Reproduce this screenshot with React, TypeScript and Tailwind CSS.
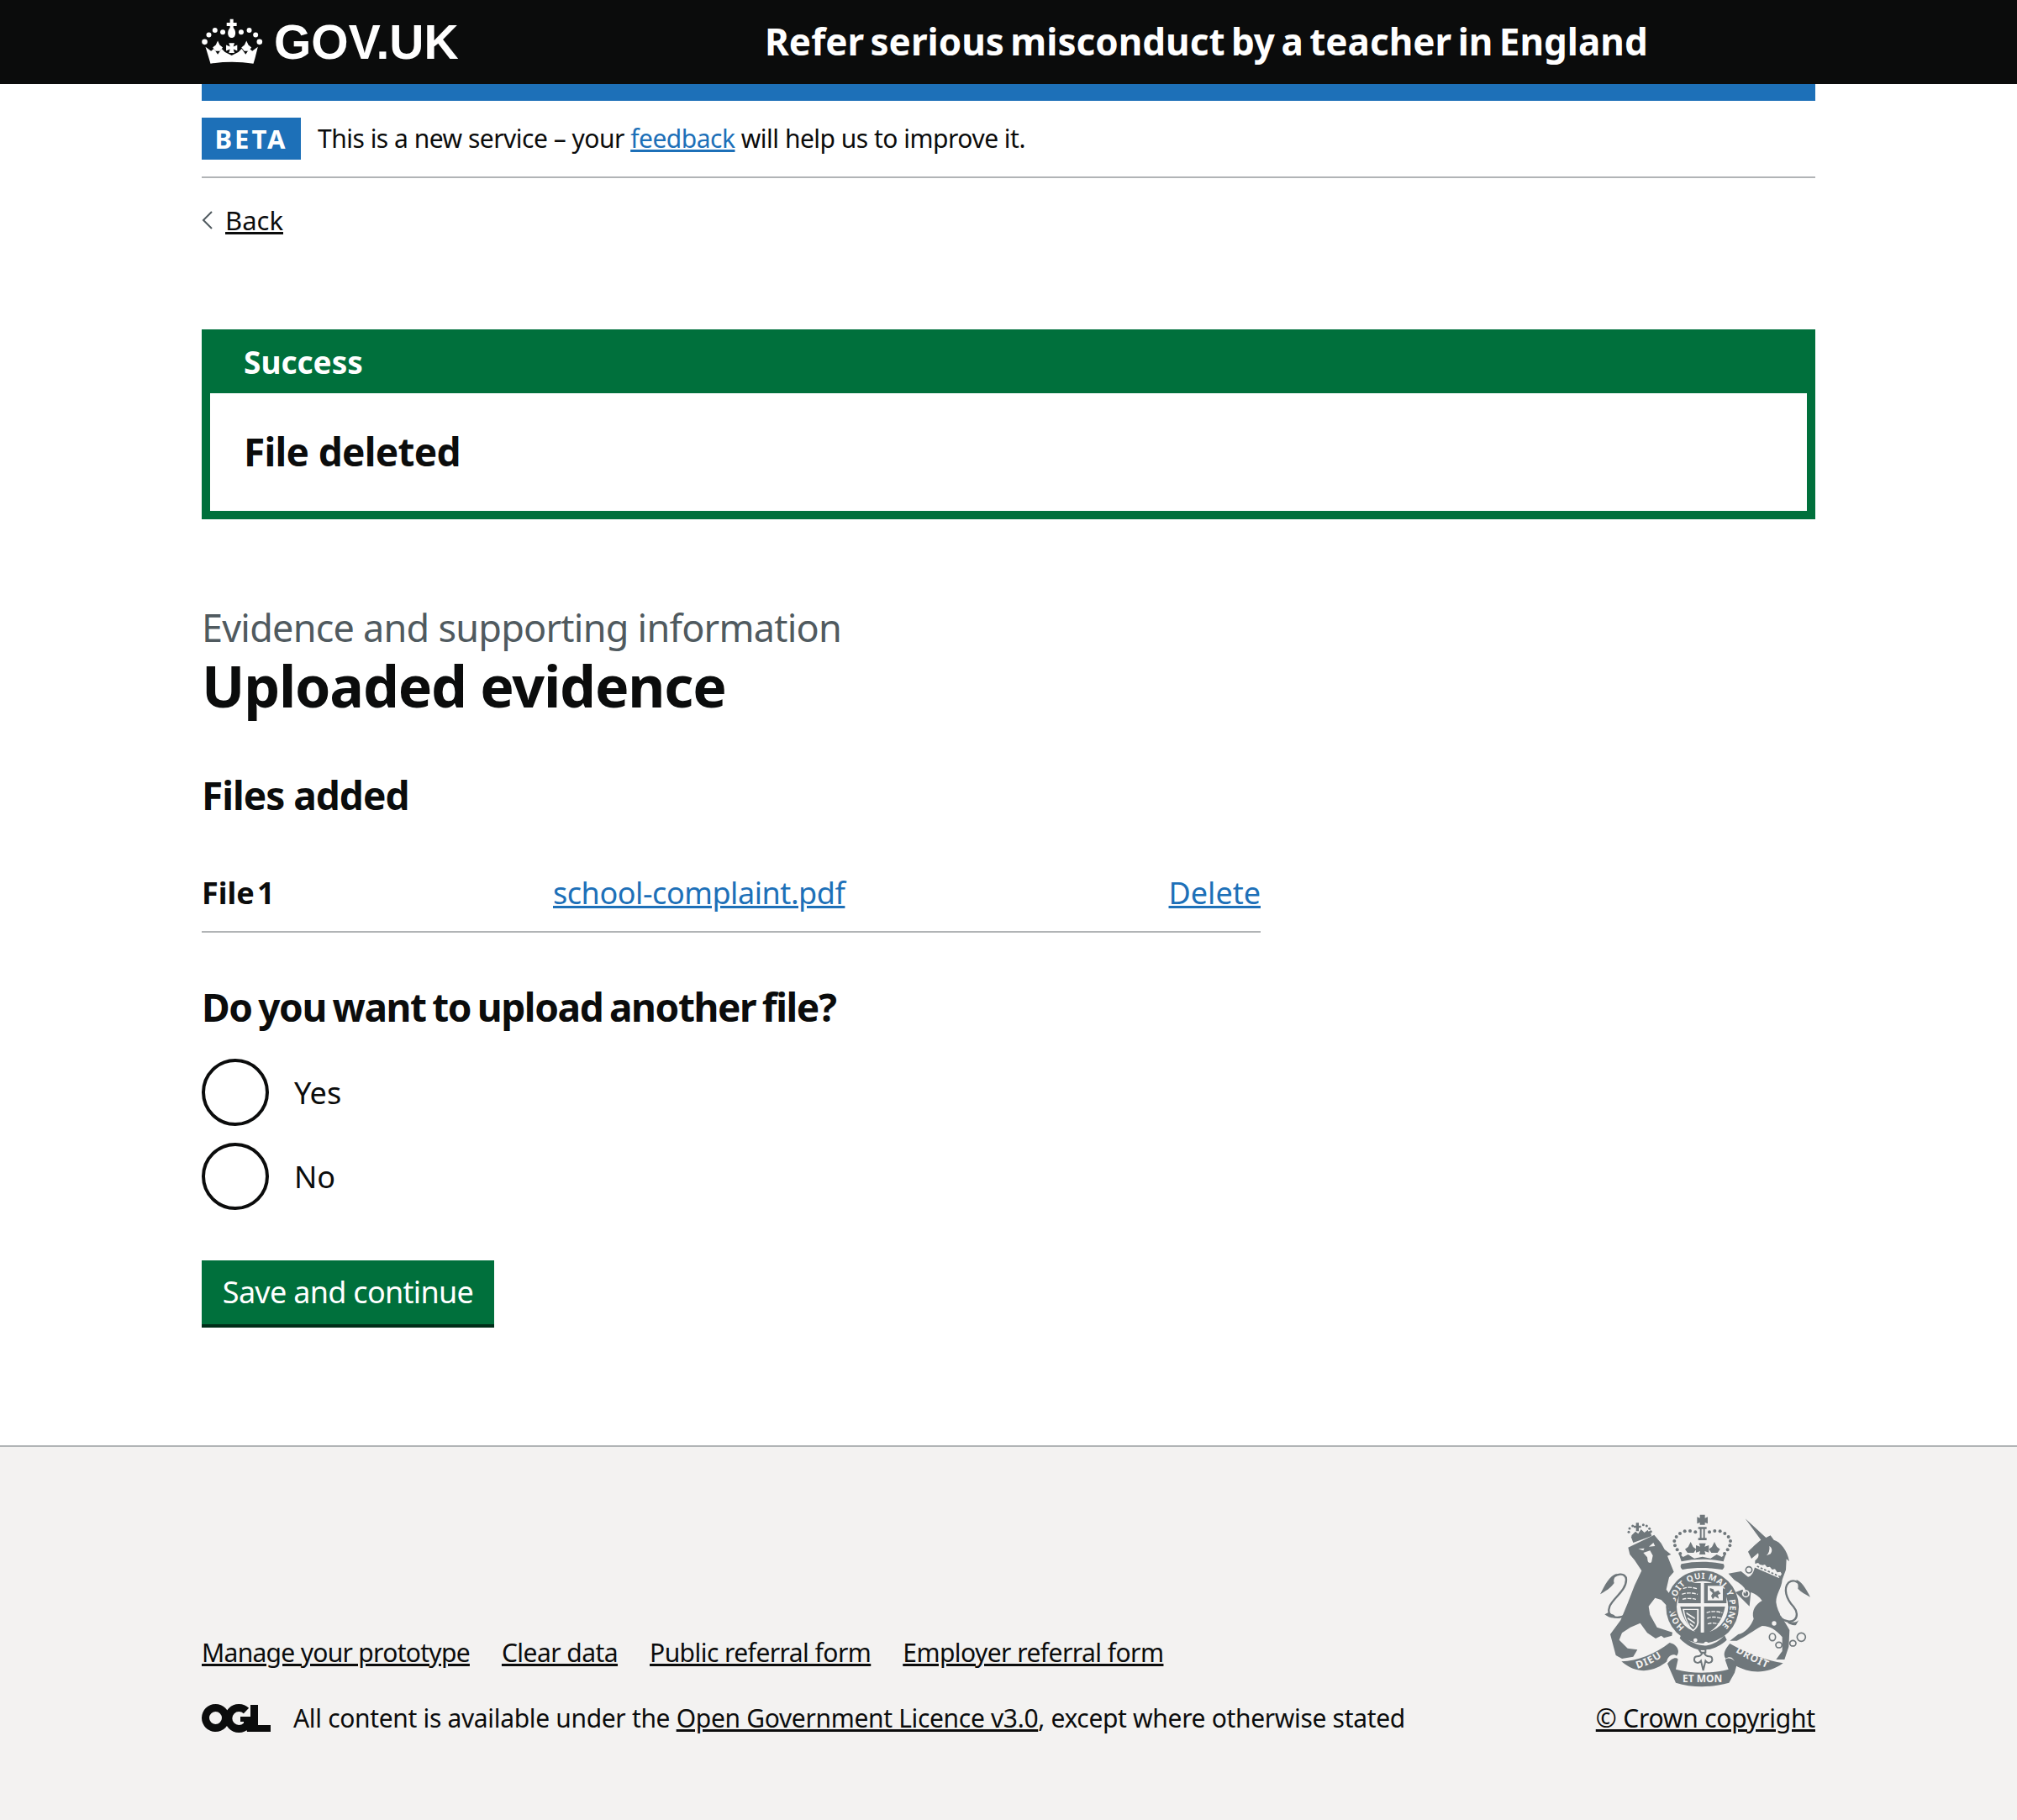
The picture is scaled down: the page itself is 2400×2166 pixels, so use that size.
import React from 'react'

const sans = 'font-["Noto_Sans",sans-serif]'

const CrownLogo = () => (
  <svg viewBox="15 15 222 175" className="w-[74px] h-[58px] fill-white">
    <path d="M116 20h12v13h12v12h-12v6c8 9 10 22 4 32-4 6-16 6-20 0-6-10-4-23 4-32v-6h-12V33h12z" />
    <circle cx="25" cy="102" r="10" /><circle cx="222" cy="102" r="10" />
    <circle cx="40" cy="77" r="9" /><circle cx="208" cy="77" r="9" />
    <circle cx="62" cy="60" r="9" /><circle cx="185" cy="60" r="9" />
    <circle cx="90" cy="67" r="9" /><circle cx="156" cy="67" r="9" />
    <path d="M72 98l7 15 11 9-10 13H64l-10-13 11-9z" />
    <path d="M175 98l7 15 11 9-10 13h-16l-10-13 11-9z" />
    <path d="M112 106h20l-4 13 14-6v21l-14-6 4 14h-20l4-14-14 6v-21l14 6z" />
    <path d="M28 120l20 15 10-8 14 20 14-20 12 12 24 12 24-12 12-12 14 20 14-20 10 8 20-15-10 40-6 20q-77-12-154 0l-6-20z" />
  </svg>
)

const OglLogo = () => (
  <svg viewBox="0 0 82 34" className="w-[82px] h-[34px] fill-[#0b0c0c]">
    <path fillRule="evenodd" d="M16.500 0a16.500 16.500 0 1 1 0 33a16.500 16.500 0 1 1 0-33zM16.500 9a7.500 7.500 0 1 0 0 15a7.500 7.500 0 1 0 0-15z" />
    <path d="M53 8A12.500 12.500 0 1 0 53 26" fill="none" stroke="#0b0c0c" strokeWidth="9" />
    <path d="M46 15h14v18h-6l-1-4-3-1v-7h-4z" />
    <path d="M58 1h9v24h15v8H58z" />
  </svg>
)

// coat of arms, traced by eye
const Crest = () => (
  <svg viewBox="66 60 762 624" className="w-[254px] h-[208px] fill-[#6f777b]">
    <defs>
      <path id="garter" d="M374 470A98 98 0 1 1 500 470" />
      <path id="dieu" d="M205 618C245 605 285 585 315 558" />
      <path id="droit" d="M555 558C590 580 630 600 672 618" />
    </defs>

    {/* royal crown */}
    <path d="M428 68h18v12l10-4v24l-10-4v8h-18v-8l-10 4V76l10 4z" />
    <path d="M422 112h30v7h-6v32h6v8h-30v-8h6v-32h-6zM434 119v32h6v-32z" fillRule="evenodd" />
    {[[412, 130], [393, 126], [374, 127], [357, 135], [344, 147], [337, 162], [339, 178], [347, 193], [358, 207],
      [462, 130], [481, 126], [500, 127], [517, 135], [530, 147], [537, 162], [535, 178], [527, 193], [516, 207]].map(([cx, cy]) => (
      <circle key={`${cx}-${cy}`} cx={cx} cy={cy} r="6" />
    ))}
    <path d="M395 165l9 18 11 8-9 13h-22l-9-13 11-8zM480 165l9 18 11 8-9 13h-22l-9-13 11-8z" />
    <path d="M425 170h24l-4 12 15-5v26l-15-5 3 12h-22l3-12-15 5v-26l15 5z" />
    <path d="M352 205l16 14 18-9 22 14 29-6 29 6 22-14 18 9 16-14-10 30c-46-10-104-10-150 0z" />
    <path d="M362 244c48-10 102-10 150 0 6 8 2 16-4 20-44-8-98-8-142 0-6-4-10-12-4-20z" />

    {/* garter and shield */}
    <circle cx="437" cy="397" r="130" />
    <circle cx="437" cy="397" r="92" fill="#f3f2f1" />
    <path d="M355 312h76v72h-80zM443 312h77l3 72h-80zM358 396h73v100c-38-14-63-52-73-100zM443 396h75c-9 50-36 86-75 100z" />
    <g fill="none" stroke="#f3f2f1" strokeWidth="4">
      <path d="M368 332c12-6 30-6 50 0M364 352c14-6 36-6 56 0M366 370c12-4 30-4 48 0" strokeDasharray="14 4" />
      <path d="M452 418c14-6 36-6 56 0M454 438c12-6 32-6 50 0M456 458c10-4 24-4 40 0" strokeDasharray="14 4" />
    </g>
    <path d="M456 322h54v52h-54z" fill="#f3f2f1" />
    <path d="M464 330l12 4 4 10 14-6 8 12-10 4 4 14-14-8-8 10-6-12 6-10-10-10z" />
    <path d="M366 404h58v50c-2 14-10 24-20 30-16-12-32-44-38-80z" fill="#f3f2f1" />
    <path d="M372 408l46 0 0 46c-2 12-8 20-14 24-14-10-28-40-32-70z" />
    <path d="M380 416l30 20v6l-30-20zM384 434l26 18v6l-26-18zM392 454l14 10v6l-14-10z" fill="#f3f2f1" />
    <text className={sans} fontSize="30" fontWeight="700" fill="#f3f2f1">
      <textPath href="#garter" textLength="470" lengthAdjust="spacing">HONI SOIT QUI MAL Y PENSE</textPath>
    </text>
    <path d="M362 495c20 20 50 38 78 40s56-14 76-36l8 16c-24 22-54 36-84 36-30 0-62-18-84-42z" />
    <circle cx="412" cy="516" r="7" fill="#f3f2f1" /><circle cx="450" cy="528" r="7" fill="#f3f2f1" />

    {/* lion */}
    <path d="M172 185L265 140 290 170 302 192 325 210 312 215 335 272 318 292 308 335 345 385 345 410 328 420 312 395 290 372 268 365 245 395 250 425 275 470 330 488 328 500 300 508 290 500 270 510 240 490 215 455 180 470 150 490 140 515 170 545 205 550 190 575 150 582 128 570 108 495 145 445 170 385 195 320 220 268 195 230 178 210z" />
    <path d="M165 425C130 445 92 432 106 395C118 365 165 340 165 300C165 272 125 276 108 305" fill="none" stroke="#6f777b" strokeWidth="7" />
    <path d="M132 278C105 285 88 320 72 352C92 340 108 332 122 312C118 300 124 290 132 278z" />
    <path d="M100 418c-6 4-12 6-12 6 12 10 26 14 40 12l-6-10z" />
    <path d="M208 190l22-2-4 8zM262 168l-16 14 22-2z" fill="#f3f2f1" />
    <path d="M226 204l24-8 10 18-4 20c0 8-12 8-14 0l-2-14z" fill="#f3f2f1" />

    {/* lion crown */}
    <path d="M182 146l68-20 6 18-66 24z" />
    <path d="M184 142l14-14 10 8 10-16 12 12 12-10 4 12-60 18z" />
    <path d="M200 97h10v10h8v8h-8v12h-10v-12h-8v-8h8z" />
    {[[174, 130], [177, 117], [188, 108], [226, 104], [238, 108], [248, 118], [253, 128]].map(([cx, cy]) => (
      <circle key={`${cx}-${cy}`} cx={cx} cy={cy} r="4.500" />
    ))}

    {/* unicorn */}
    <path d="M590 82L664 150 680 142 692 158C716 165 740 195 747 235L737 226 735 265 722 300C720 330 700 350 700 380C705 420 730 445 748 480L745 540 730 585 700 585 722 555 722 505C700 480 680 465 650 465C620 480 590 505 560 518L535 518 565 495C590 490 610 465 620 440C610 410 630 385 650 375C640 360 625 350 610 345L605 395 555 345 580 335 590 350C600 330 565 310 550 300L530 278 575 270 600 290C612 290 622 270 625 250L625 232C635 225 640 215 636 205L612 225 600 200C620 180 632 168 646 158z" />
    <path d="M622 244l14-4 6 6 10 2 8-2 8 10 10-2 8 10 10-2 8 12 12-2 4 8-10 14-88-38z" fill="#f3f2f1" />
    <path d="M632 252l84 38" stroke="#6f777b" strokeWidth="5" fill="none" strokeDasharray="8 6" />
    <path d="M676 180c10 6 12 18 4 28l-14 6c8-8 12-20 10-34z" fill="#f3f2f1" />
    <g fill="#f3f2f1">
      <circle cx="726" cy="375" r="10" /><circle cx="722" cy="422" r="8" /><circle cx="693" cy="456" r="8" />
    </g>
    <g fill="none" stroke="#6f777b" strokeWidth="5">
      <circle cx="603" cy="265" r="11" />
      <circle cx="592" cy="350" r="11" stroke="#f3f2f1" />
      <ellipse cx="687" cy="505" rx="11" ry="13" />
      <ellipse cx="710" cy="533" rx="11" ry="10" />
      <ellipse cx="760" cy="527" rx="11" ry="10" />
      <circle cx="790" cy="505" r="15" />
    </g>
    <path d="M715 436C760 470 792 432 762 396C736 368 725 332 745 310C765 295 788 312 800 338" fill="none" stroke="#6f777b" strokeWidth="7" />
    <path d="M772 300c18 6 34 30 50 62-18-10-34-18-44-30 2-10 0-20-6-32z" />
    <path d="M745 446c12 8 26 8 36-2l-10 18c-10 2-22-2-30-8z" />

    {/* ribbons */}
    <path d="M148 592C205 590 270 565 320 525C345 530 360 555 345 572C330 560 312 575 310 592C280 618 215 650 148 592z" />
    <path d="M725 598C670 590 600 565 535 528C520 545 508 565 520 582C535 570 552 578 555 606C600 634 670 640 725 598z" />
    <path d="M312 600C325 582 342 574 350 584L342 620C400 636 470 636 530 620L518 586C530 574 552 584 560 602L552 632 532 668C470 686 400 686 342 668z" />
    <text className={sans} fontSize="36" fontWeight="700" fill="#f3f2f1" letterSpacing="3">
      <textPath href="#dieu">DIEU</textPath>
    </text>
    <text className={sans} fontSize="36" fontWeight="700" fill="#f3f2f1" letterSpacing="3">
      <textPath href="#droit">DROIT</textPath>
    </text>
    <text x="437" y="666" textAnchor="middle" className={sans} fontSize="36" fontWeight="700" fill="#f3f2f1">ET MON</text>

    {/* fleur under the shield */}
    <path d="M424 548h24v12l-6 0c4 10 12 14 20 14 12 0 14 18 2 22-6 2-12 0-16-6l-8 34-8-34c-4 6-10 8-16 6-12-4-10-22 2-22 8 0 16-4 20-14h-6z" fill="none" stroke="#6f777b" strokeWidth="6" />
  </svg>
)

export default function App() {
  return (
    <div className={`${sans} min-h-[2166px] flex flex-col bg-white text-[#0b0c0c]`}>
      <header className="h-[100px] bg-[#0b0c0c] pl-[240px] flex items-center">
        <div className="w-[670px] flex items-center gap-[12px]">
          <CrownLogo />
          <span className='font-["Liberation_Sans",sans-serif] font-bold text-[57px] leading-none text-white'>GOV.UK</span>
        </div>
        <span className="font-bold text-white text-[44px] leading-none [word-spacing:-4px] -translate-y-[1px]">Refer serious misconduct by a teacher in England</span>
      </header>

      <main className="mx-[240px] flex-1">
        <div className="h-[20px] bg-[#1d70b8]" />
        <div className="mt-[20px] pb-[20px] border-b-2 border-[#b1b4b6] flex items-center gap-[20px]">
          <span className="w-[118px] h-[50px] bg-[#1d70b8] text-white font-bold text-[31px] leading-none tracking-[3px] flex items-center justify-center">BETA</span>
          <span className="text-[30px] leading-[50px] tracking-[-0.5px]">This is a new service – your <a className="text-[#1d70b8] underline">feedback</a> will help us to improve it.</span>
        </div>
        <div className="mt-[26px] flex items-center gap-[14px] h-[48px]">
          <svg viewBox="0 0 14 24" className="w-[14px] h-[24px] fill-none stroke-[#505a5f] stroke-2"><path d="M12 2 2 12l10 10" /></svg>
          <a className="text-[31px] leading-[48px] underline">Back</a>
        </div>

        <section className="mt-[106px] border-[10px] border-[#00703c]">
          <div className="bg-[#00703c] h-[66px] pl-[40px] pb-[8px] text-white font-bold text-[37px] leading-[44px] flex items-center">Success</div>
          <div className="h-[140px] pl-[40px] pb-[2px] flex items-center font-bold text-[46px] leading-[56px] tracking-[-0.7px]">File deleted</div>
        </section>

        <p className="mt-[99px] text-[#505a5f] text-[45px] leading-[60px] tracking-[-0.77px]">Evidence and supporting information</p>
        <h1 className="font-bold text-[68px] leading-[80px] tracking-[-1.2px] -mt-[1px]">Uploaded evidence</h1>

        <h2 className="mt-[60px] font-bold text-[46px] leading-[60px] tracking-[-1px]">Files added</h2>

        <div className="mt-[54px] w-[1260px] h-[80px] pt-[8px] border-b-2 border-[#b1b4b6] flex items-start text-[36px] leading-[50px]">
          <span className="w-[418px] font-bold [word-spacing:-6px]">File 1</span>
          <a className="text-[#1d70b8] underline tracking-[-0.45px]">school-complaint.pdf</a>
          <a className="ml-auto text-[#1d70b8] underline">Delete</a>
        </div>

        <h2 className="mt-[58px] font-bold text-[46px] leading-[60px] tracking-[-1.4px] [word-spacing:-3px]">Do you want to upload another file?</h2>

        <div className="mt-[32px] flex flex-col gap-[20px]">
          {['Yes', 'No'].map((label) => (
            <div key={label} className="flex items-center gap-[30px] h-[80px] text-[36px] leading-[50px]">
              <span className="w-[80px] h-[80px] rounded-full border-4 border-[#0b0c0c]" />
              <span className="pt-[2px]">{label}</span>
            </div>
          ))}
        </div>

        <button className="mt-[60px] w-[348px] h-[80px] bg-[#00703c] border-b-4 border-[#002d18] text-white text-[36px] leading-[50px] tracking-[-0.7px] block">Save and continue</button>
      </main>

      <footer className="h-[446px] bg-[#f3f2f1] border-t-2 border-[#b1b4b6] px-[240px] flex items-end pb-[99px] gap-[20px] text-[30px] leading-[44px]">
        <div className="flex-1">
          <ul className="flex gap-[38px] mb-[34px] tracking-[-0.55px]">
            <li className="underline tracking-[-0.7px]">Manage your prototype</li>
            <li className="underline">Clear data</li>
            <li className="underline">Public referral form</li>
            <li className="underline">Employer referral form</li>
          </ul>
          <div className="flex items-center gap-[27px] tracking-[-0.33px]">
            <OglLogo />
            <span>All content is available under the <a className="underline">Open Government Licence v3.0</a>, except where otherwise stated</span>
          </div>
        </div>
        <div className="flex flex-col items-end">
          <div className="mr-[4px]"><Crest /></div>
          <a className="mt-[15px] underline tracking-[-0.2px]">© Crown copyright</a>
        </div>
      </footer>
    </div>
  )
}
